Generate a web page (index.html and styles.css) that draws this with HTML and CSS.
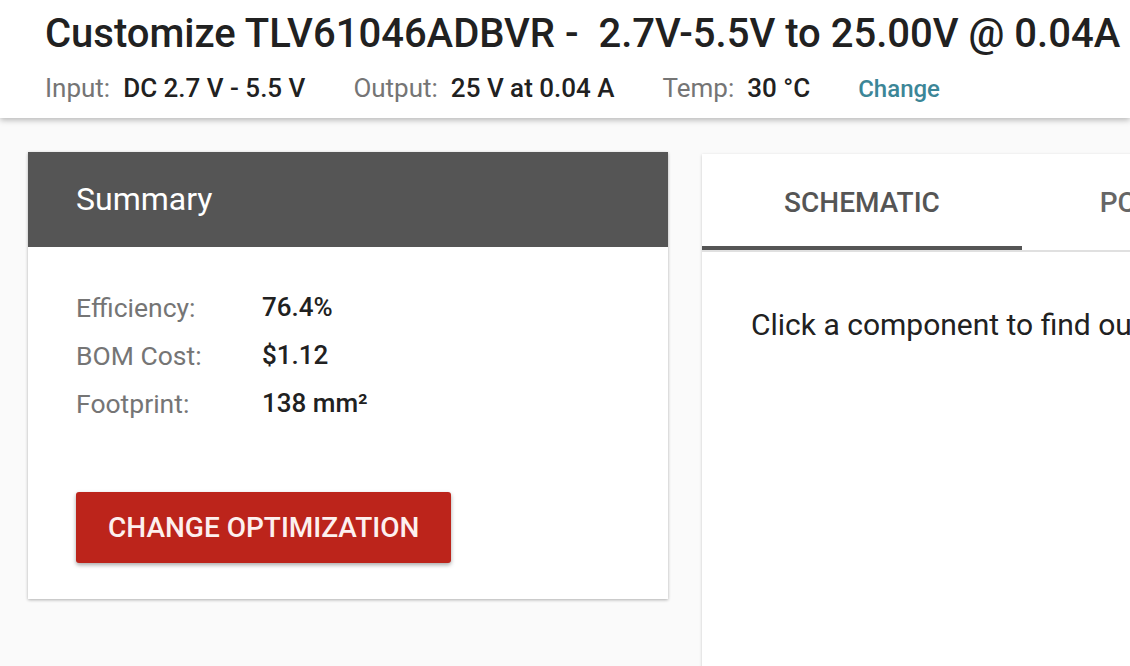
FILE: index.html
```html
<!DOCTYPE html>
<html lang="en">
<head>
<meta charset="utf-8">
<title>Customize TLV61046ADBVR</title>
<link rel="stylesheet" href="styles.css">
</head>
<body>
<header class="topbar">
  <h1 class="title">Customize TLV61046ADBVR -&nbsp; 2.7V-5.5V to 25.00V @ 0.04A</h1>
  <div class="specs">
    <span class="spec"><span class="spec-label">Input:</span><span class="spec-value">DC 2.7 V - 5.5 V</span></span>
    <span class="spec"><span class="spec-label">Output:</span><span class="spec-value">25 V at 0.04 A</span></span>
    <span class="spec"><span class="spec-label">Temp:</span><span class="spec-value">30 °C</span></span>
    <a class="change-link" href="#">Change</a>
  </div>
</header>
<main class="content">
  <section class="summary-card">
    <div class="summary-head">Summary</div>
    <div class="summary-body">
      <div class="rows">
        <div class="row"><span class="row-label">Efficiency:</span><span class="row-value">76.4%</span></div>
        <div class="row"><span class="row-label">BOM Cost:</span><span class="row-value">$1.12</span></div>
        <div class="row"><span class="row-label">Footprint:</span><span class="row-value">138 mm²</span></div>
      </div>
      <button class="opt-button" type="button">CHANGE OPTIMIZATION</button>
    </div>
  </section>
  <section class="viewer">
    <div class="tabs">
      <div class="tab tab-active">SCHEMATIC</div>
      <div class="tab">PCB LAYOUT</div>
    </div>
    <div class="viewer-body">
      <p class="hint">Click a component to find out more about it</p>
    </div>
  </section>
</main>
</body>
</html>
```

FILE: styles.css
```css
html, body {
  margin: 0;
  padding: 0;
}
body {
  width: 1130px;
  height: 666px;
  overflow: hidden;
  background: #fafafa;
  font-family: Roboto, "Liberation Sans", Arial, sans-serif;
  color: #212121;
}
.topbar {
  position: relative;
  z-index: 2;
  background: #ffffff;
  height: 118px;
  box-sizing: border-box;
  padding: 10px 0 0 45px;
  box-shadow: 0 2px 6px rgba(0, 0, 0, 0.28);
  white-space: nowrap;
}
.title {
  margin: 0;
  font-size: 40px;
  line-height: 48px;
  font-weight: 500;
  color: #212121;
}
.specs {
  margin-top: 13px;
  display: flex;
  align-items: baseline;
  gap: 48px;
  font-size: 26px;
  line-height: 34px;
}
.spec-label {
  color: #757575;
  margin-right: 13px;
}
.spec-value {
  font-weight: 500;
  color: #212121;
}
.change-link {
  color: #3c8697;
  font-size: 24px;
  font-weight: 500;
  text-decoration: none;
}
.content {
  display: flex;
  align-items: flex-start;
  gap: 34px;
  padding: 34px 0 0 28px;
}
.summary-card {
  flex: 0 0 640px;
  background: #ffffff;
  box-shadow: 0 1px 3px rgba(0, 0, 0, 0.3);
}
.summary-head {
  height: 95px;
  background: #555555;
  color: #ffffff;
  font-size: 32px;
  line-height: 95px;
  padding-left: 48px;
}
.summary-body {
  padding: 36px 48px 36px 48px;
}
.row {
  display: flex;
  height: 48px;
  align-items: center;
  font-size: 26px;
}
.row-label {
  width: 186px;
  color: #757575;
  font-size: 26.5px;
}
.row-value {
  font-weight: 500;
  color: #212121;
}
.opt-button {
  margin-top: 65px;
  display: block;
  height: 71px;
  padding: 0 32px;
  border: none;
  border-radius: 3px;
  background: #bc241b;
  color: #fdf0ef;
  font-family: inherit;
  font-size: 28px;
  font-weight: 500;
  box-shadow: 0 2px 4px rgba(0, 0, 0, 0.35);
}
.viewer {
  flex: 0 0 600px;
  margin-top: 2px;
  height: 520px;
  background: #ffffff;
  box-shadow: 0 1px 3px rgba(0, 0, 0, 0.2);
}
.tabs {
  display: flex;
  border-bottom: 2px solid #e0e0e0;
}
.tab {
  flex: 0 0 320px;
  height: 96px;
  box-sizing: border-box;
  display: flex;
  align-items: center;
  justify-content: center;
  font-size: 28px;
  font-weight: 500;
  color: #666666;
}
.tab-active {
  color: #555555;
  border-bottom: 4px solid #555555;
  padding-top: 4px;
}
.viewer-body {
  padding: 0 0 0 49px;
}
.hint {
  margin: 53px 0 0 0;
  font-size: 30px;
  line-height: 40px;
  white-space: nowrap;
  color: #212121;
}
```
